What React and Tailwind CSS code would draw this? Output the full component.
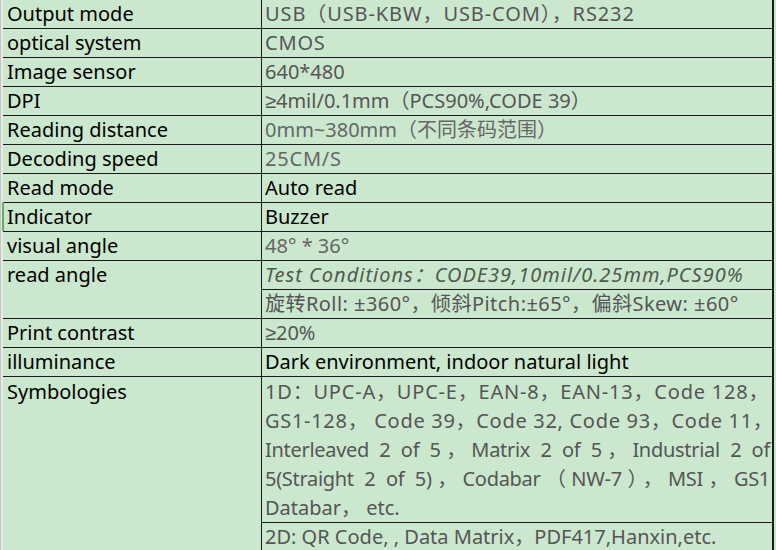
import React from 'react';

const font = { fontFamily: '"Noto Sans", "Noto Sans CJK SC", sans-serif' };

const Ge = () => <span className="font-['Liberation_Sans']">≥</span>;

const rows = [
  { label: 'Output mode', value: 'USB（USB-KBW，USB-COM），RS232', tone: 'text-[#555555] tracking-[0.9px]' },
  { label: 'optical system', value: 'CMOS', tone: 'text-[#555555] tracking-[0.8px]' },
  { label: 'Image sensor', value: '640*480', tone: 'text-[#555555]' },
  { label: 'DPI', value: <><Ge />4mil/0.1mm（PCS90%,CODE 39）</>, tone: 'text-[#555555]' },
  { label: 'Reading distance', value: '0mm~380mm（不同条码范围）', tone: 'text-[#666666]' },
  { label: 'Decoding speed', value: '25CM/S', tone: 'text-[#666666] tracking-[0.8px]' },
  { label: 'Read mode', value: 'Auto read', tone: 'text-black' },
  { label: 'Indicator', value: 'Buzzer', tone: 'text-black', mark: true },
  { label: 'visual angle', value: '48° * 36°', tone: 'text-[#666666]' },
];

// lines 3 and 4 are spread to the cell edge in the original sheet
const symLines = [
  { text: '1D：UPC-A，UPC-E，EAN-8，EAN-13，Code 128，', cls: 'tracking-[0.8px]' },
  { text: 'GS1-128， Code 39，Code 32, Code 93，Code 11，', cls: 'tracking-[0.7px]' },
  { text: 'Interleaved 2 of 5，Matrix 2 of 5，Industrial 2 of', cls: 'tracking-[-0.3px] text-justify [text-align-last:justify]' },
  { text: '5(Straight 2 of 5)，Codabar（NW-7），MSI，GS1', cls: 'tracking-[-0.3px] text-justify [text-align-last:justify]' },
  { text: 'Databar，  etc.', cls: '' },
];

const Label = ({ children, mark, className = '' }) => (
  <div className={`relative w-[259px] shrink-0 border-r border-[#1a1a1a] pl-[4px] text-black ${className}`}>
    {mark && <div className="absolute left-[-1px] top-[-1px] h-[29px] w-[2px] bg-[#6aab6a]" />}
    {children}
  </div>
);

const Row = ({ label, value, tone, mark }) => (
  <div className="flex h-[29px] border-b border-[#1a1a1a] leading-[28px]">
    <Label mark={mark}>{label}</Label>
    <div className={`flex-1 pl-[3px] whitespace-nowrap ${tone}`}>{value}</div>
  </div>
);

export default function App() {
  return (
    <div className="flex h-[550px] w-[776px] overflow-hidden bg-[#cbe8ce] text-[20px]" style={font}>
      <div className="w-[3px] shrink-0 border-l border-[#c4c4c4] bg-[#e2ece2]" />
      <div className="w-[771px] shrink-0 border-r-2 border-[#1a1a1a]">
        {rows.map((r) => (
          <Row key={r.label} {...r} />
        ))}

        <div className="flex h-[58px] border-b border-[#1a1a1a] leading-[28px]">
          <Label>read angle</Label>
          <div className="flex-1 whitespace-nowrap">
            <div className="h-[29px] border-b border-[#1a1a1a] pl-[3px] italic tracking-[1px] text-[#4f5a4f]">
              Test Conditions：CODE39,10mil/0.25mm,PCS90%
            </div>
            <div className="h-[28px] pl-[3px] tracking-[0.45px] text-[#555555]">
              旋转Roll: ±360°，倾斜Pitch:±65°，偏斜Skew: ±60°
            </div>
          </div>
        </div>

        <Row label="Print contrast" value={<><Ge />20%</>} tone="text-[#555555]" />
        <Row label="illuminance" value="Dark environment, indoor natural light" tone="text-black" />

        <div className="flex leading-[29px]">
          <Label className="h-[200px]">Symbologies</Label>
          <div className="min-w-0 flex-1">
            <div className="border-b border-[#1a1a1a] pl-[3px] pr-[2px] text-[#555555]">
              {symLines.map((l) => (
                <div key={l.text} className={`h-[29px] whitespace-nowrap ${l.cls}`}>
                  {l.text}
                </div>
              ))}
            </div>
            <div className="h-[29px] pl-[3px] leading-[28px] whitespace-nowrap text-[#555555]">
              2D: QR Code, , Data Matrix，PDF417,Hanxin,etc.
            </div>
          </div>
        </div>
      </div>
    </div>
  );
}
